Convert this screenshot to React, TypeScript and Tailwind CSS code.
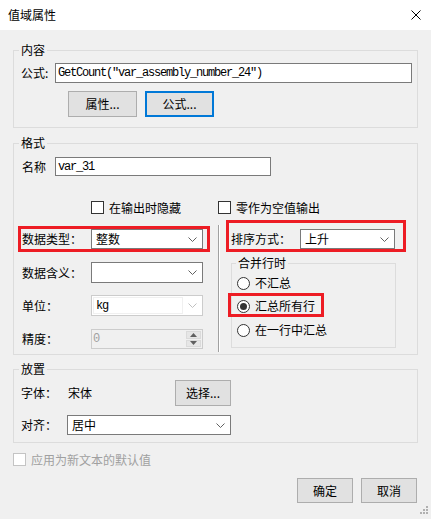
import React from "react";

const mono = "font-['Liberation_Mono',monospace] tracking-[-1.2px]";

function Chevron({ color = "#606060" }: { color?: string }) {
  return (
    <svg width="9" height="5" viewBox="0 0 9 5" className="shrink-0">
      <path d="M0.5 0.5 L4.5 4.5 L8.5 0.5" fill="none" stroke={color} strokeWidth="1" />
    </svg>
  );
}

function Select({ w, h = 20, text }: { w: string; h?: number; text?: string }) {
  return (
    <div
      className={`${w} flex items-center justify-between border border-[#7a7a7a] bg-white pl-[4px] pr-[5px]`}
      style={{ height: h }}
    >
      <span className="leading-[14px]">{text}</span>
      <Chevron />
    </div>
  );
}

function Checkbox({ disabled }: { disabled?: boolean }) {
  return (
    <div
      className={
        disabled
          ? "w-[13px] h-[13px] shrink-0 border border-[#c4c4c4] bg-white"
          : "w-[13px] h-[13px] shrink-0 border border-[#333333] bg-white"
      }
    />
  );
}

function Radio({ checked }: { checked?: boolean }) {
  return (
    <div className="w-[13px] h-[13px] shrink-0 rounded-full border border-[#333333] bg-white flex items-center justify-center">
      {checked && <div className="w-[7px] h-[7px] rounded-full bg-[#333333]" />}
    </div>
  );
}

function Btn({ children, w, h, focused }: { children: React.ReactNode; w: string; h: string; focused?: boolean }) {
  return (
    <div
      className={
        focused
          ? `${w} ${h} flex items-center justify-center border-2 border-[#0078d7] bg-[#e1e1e1] leading-[14px]`
          : `${w} ${h} flex items-center justify-center border border-[#adadad] bg-[#e1e1e1] leading-[14px]`
      }
    >
      {children}
    </div>
  );
}

export default function App() {
  return (
    <div className="relative w-[431px] h-[519px] overflow-hidden bg-[#f0f0f0] text-[12px] leading-[14px] text-black font-['Noto_Sans_CJK_SC',sans-serif]">
      {/* Title bar */}
      <div className="h-[30px] bg-white flex items-center justify-between pl-[8px] pr-[10px]">
        <span className="text-[12px] leading-[14px]">值域属性</span>
        <svg width="10" height="10" viewBox="0 0 10 10">
          <path d="M0.5 0.5 L9.5 9.5 M9.5 0.5 L0.5 9.5" stroke="#000" strokeWidth="1" fill="none" />
        </svg>
      </div>

      <div className="flex flex-col px-[13px]">
        {/* 内容 */}
        <fieldset className="mt-[13px] min-w-0 border border-[#dcdcdc] pl-[7px] pr-[5px] pt-[6px] pb-[10px]">
          <legend className="-ml-[2px] px-[2px] leading-[14px]">内容</legend>
          <div className="flex items-center h-[20px]">
            <span className="w-[34px] shrink-0">公式:</span>
            <div className={`flex-1 h-[20px] border border-[#7a7a7a] bg-white flex items-center pl-[2px] ${mono}`}>
              GetCount("var_assembly_number_24")
            </div>
          </div>
          <div className="flex gap-[8px] mt-[8px] ml-[47px]">
            <Btn w="w-[69px]" h="h-[26px]">属性...</Btn>
            <Btn w="w-[69px]" h="h-[26px]" focused>公式...</Btn>
          </div>
        </fieldset>

        {/* 格式 */}
        <fieldset className="mt-[8px] min-w-0 border border-[#dcdcdc] pl-[7px] pr-[5px] pt-[7px] pb-[2px]">
          <legend className="-ml-[2px] px-[2px] leading-[14px]">格式</legend>
          <div className="flex items-center h-[19px]">
            <span className="w-[34px] shrink-0 pl-[1px]">名称</span>
            <div className={`w-[216px] h-[19px] border border-[#7a7a7a] bg-white flex items-center pl-[2px] ${mono}`}>
              var_31
            </div>
          </div>
          <div className="flex items-center h-[13px] mt-[25px]">
            <div className="w-[197px] shrink-0 pl-[70px] flex items-center gap-[5px]">
              <Checkbox />
              <span>在输出时隐藏</span>
            </div>
            <div className="flex items-center gap-[5px]">
              <Checkbox />
              <span>零作为空值输出</span>
            </div>
          </div>

          <div className="flex items-start mt-[6px]">
            {/* left column */}
            <div className="w-[197px] shrink-0 flex flex-col pt-[6px]">
              <div className="-ml-[3px] w-[192px] h-[26px] border-[3px] border-[#ed1c24] flex items-center pl-[1px]">
                <span className="w-[69px] shrink-0">数据类型：</span>
                <Select w="w-[112px]" text="整数" />
              </div>
              <div className="mt-[10px] flex items-center h-[21px] pl-[1px]">
                <span className="w-[69px] shrink-0">数据含义：</span>
                <Select w="w-[112px]" h={21} />
              </div>
              <div className="mt-[12px] flex items-center h-[21px] pl-[1px]">
                <span className="w-[69px] shrink-0">单位：</span>
                <div className="w-[112px] h-[21px] border border-[#cccccc] bg-white flex items-center pl-[1px] pr-[5px] py-[1px] gap-[5px]">
                  <div className={`flex-1 h-full border border-[#f0f0f0] flex items-center pl-[2px] ${mono}`}>kg</div>
                  <Chevron color="#c0c0c0" />
                </div>
              </div>
              <div className="mt-[13px] flex items-center h-[20px] pl-[1px]">
                <span className="w-[69px] shrink-0">精度：</span>
                <div className="w-[112px] h-[20px] border border-[#cccccc] bg-[#f0f0f0] flex items-center justify-between pr-[1px]">
                  <span className={`pl-[1px] text-[#a0a0a0] ${mono}`}>0</span>
                  <div className="w-[15px] h-[16px] flex flex-col gap-[1px]">
                    <div className="flex-1 bg-[#e6e6e6] border border-[#dadada] flex items-center justify-center">
                      <svg width="7" height="4" viewBox="0 0 7 4"><path d="M3.5 0 L7 4 L0 4 Z" fill="#606060" /></svg>
                    </div>
                    <div className="flex-1 bg-[#e6e6e6] border border-[#dadada] flex items-center justify-center">
                      <svg width="7" height="4" viewBox="0 0 7 4"><path d="M0 0 L7 0 L3.5 4 Z" fill="#606060" /></svg>
                    </div>
                  </div>
                </div>
              </div>
            </div>

            {/* separator */}
            <div className="mt-[5px] h-[127px] w-[2px] shrink-0 border-l border-r border-l-[#a0a0a0] border-r-white" />

            {/* right column */}
            <div className="flex flex-col">
              <div className="ml-[6px] w-[180px] h-[32px] border-[3px] border-[#ed1c24] flex items-center pt-[6px] pl-[2px]">
                <span className="w-[69px] shrink-0">排序方式：</span>
                <Select w="w-[95px]" text="上升" />
              </div>
              <fieldset className="ml-[11px] mt-[4px] w-[165px] min-w-0 border border-[#dcdcdc] pl-[5px] pt-[5px] pb-[9px]">
                <legend className="-ml-[1px] px-[2px] leading-[14px]">合并行时</legend>
                <div className="flex items-center h-[16px] gap-[5px]">
                  <Radio />
                  <span>不汇总</span>
                </div>
                <div className="mt-[2px] -ml-[9px] w-[96px] border-[3px] border-[#ed1c24] pl-[6px] pt-[2px]">
                  <div className="flex items-center h-[16px] gap-[5px]">
                    <Radio checked />
                    <span>汇总所有行</span>
                  </div>
                </div>
                <div className="mt-[5px] flex items-center h-[16px] gap-[5px]">
                  <Radio />
                  <span>在一行中汇总</span>
                </div>
              </fieldset>
            </div>
          </div>
        </fieldset>

        {/* 放置 */}
        <fieldset className="mt-[7px] min-w-0 border border-[#dcdcdc] pl-[7px] pr-[5px] pt-[4px] pb-[7px]">
          <legend className="-ml-[2px] px-[2px] leading-[14px]">放置</legend>
          <div className="flex items-center h-[26px]">
            <span className="w-[47px] shrink-0">字体：</span>
            <span className="w-[107px] shrink-0">宋体</span>
            <Btn w="w-[56px]" h="h-[26px]">选择...</Btn>
          </div>
          <div className="mt-[9px] flex items-center h-[20px]">
            <span className="w-[46px] shrink-0">对齐：</span>
            <Select w="w-[164px]" text="居中" />
          </div>
        </fieldset>

        <div className="mt-[10px] flex items-center h-[13px] gap-[5px]">
          <Checkbox disabled />
          <span className="text-[#a0a0a0]">应用为新文本的默认值</span>
        </div>

        <div className="mt-[12px] flex justify-end gap-[8px] pr-[1px]">
          <Btn w="w-[56px]" h="h-[25px]">确定</Btn>
          <Btn w="w-[56px]" h="h-[25px]">取消</Btn>
        </div>
      </div>

      {/* resize grip */}
      <svg className="absolute right-[2px] bottom-[4px]" width="10" height="10" viewBox="0 0 10 10">
        <rect x="7" y="1" width="2" height="2" fill="#b0b0b0" />
        <rect x="4" y="4" width="2" height="2" fill="#b0b0b0" />
        <rect x="7" y="4" width="2" height="2" fill="#b0b0b0" />
        <rect x="1" y="7" width="2" height="2" fill="#b0b0b0" />
        <rect x="4" y="7" width="2" height="2" fill="#b0b0b0" />
        <rect x="7" y="7" width="2" height="2" fill="#b0b0b0" />
      </svg>
    </div>
  );
}
